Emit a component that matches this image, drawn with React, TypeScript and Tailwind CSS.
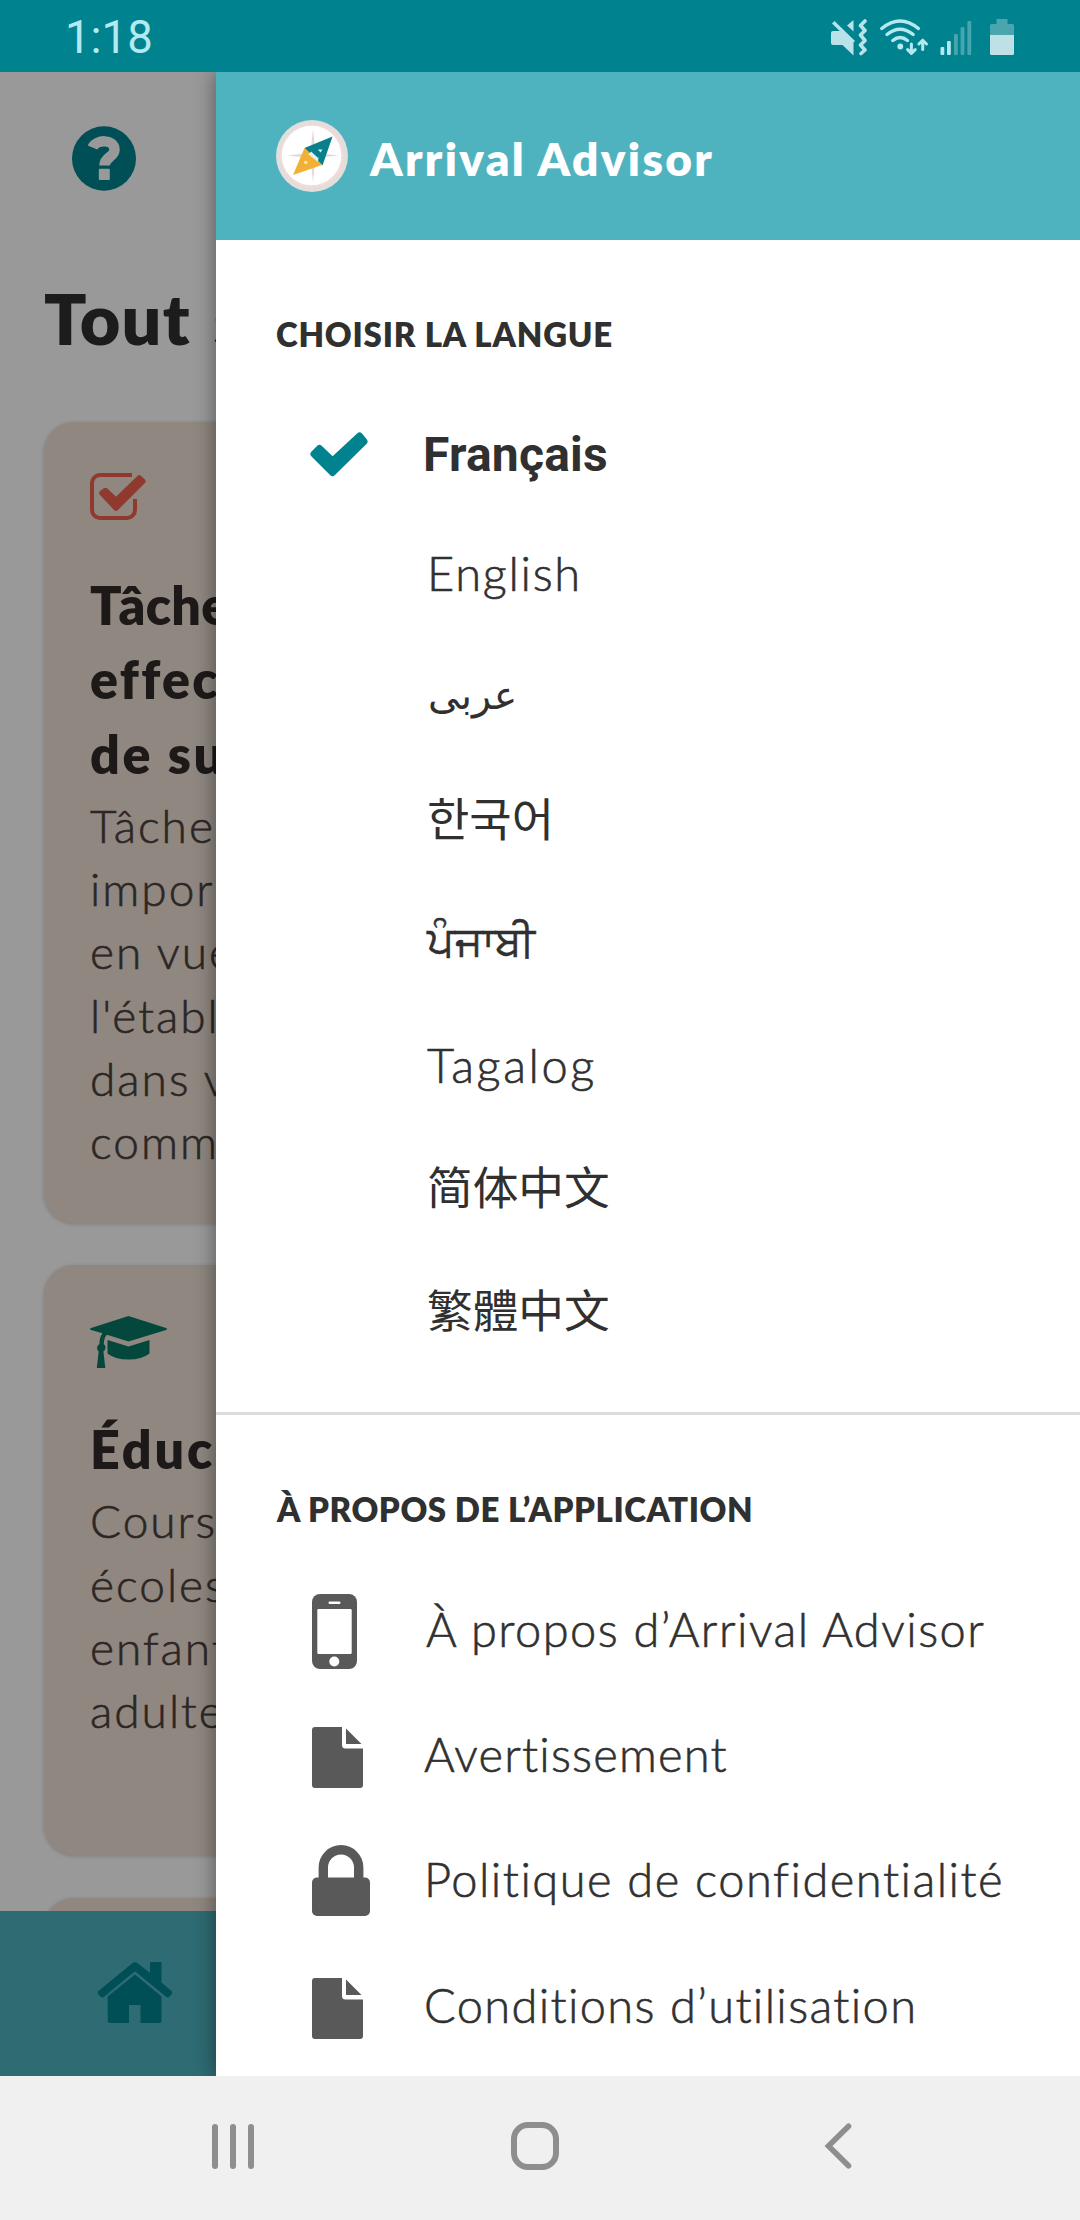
import type { ReactNode } from 'react';

function MuteVibrateIcon() {
  return (
    <svg width="37" height="38" viewBox="0 0 37 38" className="block">
      <g fill="#b9e3e8">
        <path d="M0 14 a2 2 0 0 1 2-2 h8.5 L22.5 24 V36.5 L11.5 26 H2 a2 2 0 0 1-2-2 Z" />
        <path d="M22.5 1 V12.5 L16 6.5 Z" />
        <path d="M1 4.5 L3.5 2 L24 22 L21.5 24.5 Z" />
      </g>
      <path
        d="M34 2 L29.5 6.5 L34 11.5 L29.5 16 L34 21.5 L29.5 26 L34 31 L30 34.5"
        fill="none"
        stroke="#b9e3e8"
        strokeWidth="3.6"
        strokeLinecap="round"
        strokeLinejoin="round"
      />
    </svg>
  );
}

function WifiIcon() {
  return (
    <svg width="49" height="38" viewBox="0 0 49 38" className="block">
      <g fill="none" stroke="#b2eaf0" strokeWidth="3.4" strokeLinecap="round">
        <path d="M1.8 9.5 Q20 -5.5 38.4 9.5" />
        <path d="M7 15.5 Q20 5 33.2 15.5" />
        <path d="M12.8 21.5 Q20 15.5 27.5 21.5" />
      </g>
      <circle cx="20.3" cy="27.5" r="2.9" fill="#b2eaf0" />
      <g fill="none" stroke="#b2eaf0" strokeWidth="3" strokeLinecap="round" strokeLinejoin="round">
        <path d="M31.4 25 V34 M27.6 30.6 L31.4 34.4 L35.2 30.6" />
        <path d="M42.7 30.5 V21.5 M38.9 25 L42.7 21.2 L46.5 25" />
      </g>
    </svg>
  );
}

function SignalIcon() {
  return (
    <svg width="32" height="36" viewBox="0 0 32 36" className="block">
      <rect x="0.5" y="28" width="3.8" height="8" rx="1" fill="#b2eaf0" />
      <rect x="7" y="22" width="3.8" height="14" rx="1" fill="#b2eaf0" />
      <rect x="14" y="15" width="3.8" height="21" rx="1" fill="#48a5ae" />
      <rect x="20.6" y="8" width="3.8" height="28" rx="1" fill="#48a5ae" />
      <rect x="27.4" y="2" width="3.8" height="34" rx="1" fill="#48a5ae" />
    </svg>
  );
}

function BatteryIcon() {
  return (
    <svg width="24" height="36" viewBox="0 0 24 36" className="block">
      <path d="M6.5 0 H17.5 V5 H22.5 a1.5 1.5 0 0 1 1.5 1.5 V16 H0 V6.5 A1.5 1.5 0 0 1 1.5 5 H6.5 Z" fill="#4ba5ae" />
      <path d="M0 16 H24 V34.5 a1.5 1.5 0 0 1 -1.5 1.5 H1.5 A1.5 1.5 0 0 1 0 34.5 Z" fill="#bfe0e4" />
    </svg>
  );
}

function HelpIcon() {
  return (
    <svg width="64" height="65" viewBox="0 0 64 65" className="block">
      <ellipse cx="32" cy="32.5" rx="32" ry="32.3" fill="#00838f" />
      <path
        d="M20.5 21.5 C24 13.5 42 12.5 42.5 23.5 C43 31 32.5 30.5 32.5 39.5"
        fill="none"
        stroke="#fff"
        strokeWidth="10.5"
      />
      <rect x="26.8" y="42.8" width="11" height="11.2" rx="1" fill="#fff" />
    </svg>
  );
}

function CompassLogo() {
  return (
    <svg width="72" height="72" viewBox="0 0 72 72" className="block">
      <circle cx="36" cy="36" r="36" fill="#e3dedb" />
      <circle cx="36" cy="36" r="31.5" fill="#f0dcd9" />
      <circle cx="35.5" cy="35.5" r="29.8" fill="#fff" />
      <path d="M37 9 L39.6 33 L63 35.5 L39.6 38 L37 62 L34.4 38 L11 35.5 L34.4 33 Z" fill="#e0dbd7" />
      <path d="M56.5 16.5 L28.5 28 L46.5 45.5 Z" fill="#0a7f8c" />
      <path d="M28.5 28 L17 55 L46 45 Z" fill="#f2b035" />
      <path d="M32 34 L36.5 31 L42.5 36.5 L42 42 Z" fill="#e9efe6" />
      <path d="M36 31 L42.5 37" stroke="#0a7f8c" strokeWidth="2" />
      <path d="M42 29.5 h4.5 l-2 3 z" fill="#d9f0f0" />
      <circle cx="29.8" cy="42.5" r="1.8" fill="#fbe3b0" />
    </svg>
  );
}

function TealCheck() {
  return (
    <svg width="58" height="45" viewBox="0 0 58 45" className="block">
      <path
        d="M4 22 L9.5 16.5 L22.5 29 L49.5 4 L54 9.5 L22.5 40.5 Z"
        fill="#00838f"
        stroke="#00838f"
        strokeWidth="7"
        strokeLinejoin="round"
      />
    </svg>
  );
}

function TaskIcon() {
  return (
    <svg width="57" height="48" viewBox="0 0 57 48" className="block">
      <path
        d="M42 2 H10 A8 8 0 0 0 2 10 V37 A8 8 0 0 0 10 45 H37 A8 8 0 0 0 45 37 V26"
        fill="none"
        stroke="#f0604e"
        strokeWidth="4"
      />
      <path
        d="M12 20 L15.5 17.5 L26 27.5 L49.3 5 L52.8 8.2 L26 35 Z"
        fill="#f0604e"
        stroke="#f0604e"
        strokeWidth="5.5"
        strokeLinejoin="round"
      />
    </svg>
  );
}

function GraduationIcon() {
  return (
    <svg width="78" height="52" viewBox="0 0 78 52" className="block">
      <g fill="#087767">
        <path d="M38.5 0 L76 12 Q78 13 76 14 L38.5 25.5 L17 18.7 Q14 21 13.8 28 A4.6 4.6 0 0 1 13.4 35.5 L15.3 52 H6.8 L8.7 35.5 A4.6 4.6 0 0 1 9.4 28 Q9.5 21 12.5 17.3 L1 14 Q-1 13 1 12 Z" />
        <path d="M17.5 24 L38.5 30.5 L59.5 24 V37.5 Q52 43.5 38.5 43.5 T17.5 37.5 Z" />
      </g>
    </svg>
  );
}

function HomeIcon() {
  return (
    <svg width="76" height="61" viewBox="0 0 76 61" className="block">
      <g fill="#00838f">
        <path d="M35 1.6 Q38 -1 41 1.6 L53 11 V0 H64.5 V20.5 L74.5 29 Q76 30.5 74.7 32 L72.5 34.8 Q71 36.3 69.3 35 L38 9.2 L6.7 35 Q5 36.3 3.5 34.8 L1.3 32 Q0 30.5 1.5 29 Z" />
        <path d="M38 12.5 L64.5 34.5 V58.5 Q64.5 61 62 61 H43.5 V43 H32 V61 H13.2 Q10.7 61 10.7 58.5 V34.5 Z" />
      </g>
    </svg>
  );
}

function PhoneIcon() {
  return (
    <svg width="45" height="75" viewBox="0 0 45 75" className="block">
      <rect width="45" height="75" rx="8" fill="#595959" />
      <rect x="16.5" y="7.5" width="12" height="2.4" rx="1.2" fill="#fff" />
      <rect x="5.3" y="15" width="34.4" height="45" rx="1.2" fill="#fff" />
      <circle cx="22.3" cy="67.5" r="5" fill="#fff" />
    </svg>
  );
}

function FileIcon() {
  return (
    <svg width="51" height="61" viewBox="0 0 51 61" className="block">
      <path
        d="M3 0 H30 V18 Q30 21.5 33.5 21.5 H51 V58 a3 3 0 0 1 -3 3 H3 a3 3 0 0 1 -3 -3 V3 a3 3 0 0 1 3 -3 Z"
        fill="#595959"
      />
      <path d="M34 1.5 L49.5 17 H34 Z" fill="#595959" />
    </svg>
  );
}

function LockIcon() {
  return (
    <svg width="58" height="71" viewBox="0 0 58 71" className="block">
      <path d="M11.3 35 V22.5 A17.7 17.7 0 0 1 46.7 22.5 V35" fill="none" stroke="#595959" strokeWidth="9.4" />
      <rect y="32.5" width="58" height="38.5" rx="5" fill="#595959" />
    </svg>
  );
}

type TitleLine = { text: string; style: string };

function Card({ className, icon, title, lines }: { className: string; icon: ReactNode; title: TitleLine[]; lines: string[] }) {
  return (
    <section
      className={`ml-11 w-[992px] rounded-[30px] bg-[#efe1d6] pl-[46px] pt-[51px] shadow-[0_1px_4px_rgba(0,0,0,0.2)] ${className}`}
    >
      {icon}
      <h2 className="text-[52px] font-extrabold leading-[74.3px] text-[#2f2b29]">
        {title.map((t) => (
          <div key={t.text} className={t.style}>
            {t.text}
          </div>
        ))}
      </h2>
      <div className="mt-[3px] text-[46px] font-light leading-[63.2px] tracking-[2px] text-[#4a403c] [-webkit-text-stroke:0.6px_#4a403c]">
        {lines.map((t) => (
          <div key={t}>{t}</div>
        ))}
      </div>
    </section>
  );
}

const languages = [
  { label: 'English', style: 'text-[47px] font-light tracking-[1.7px] pl-[3px] pb-[3px] [-webkit-text-stroke:0.6px_#303030]' },
  { label: 'عربى', style: "font-['DejaVu_Sans',sans-serif] text-[39.5px] pl-1 pb-[5px]" },
  { label: '한국어', style: "font-['Noto_Sans_CJK_KR',sans-serif] text-[46px] pl-[3px] pb-[9px]" },
  { label: 'ਪੰਜਾਬੀ', style: 'font-[sans-serif] text-[42.6px] pl-[3px] pb-[4px] [-webkit-text-stroke:0.6px_#303030]' },
  { label: 'Tagalog', style: 'text-[47px] font-light tracking-[2.6px] pl-[3px] pb-[2px] [-webkit-text-stroke:0.6px_#303030]' },
  { label: '简体中文', style: "font-['Noto_Sans_CJK_SC',sans-serif] text-[45.7px] pl-[3px] pb-[8px]" },
  { label: '繁體中文', style: "font-['Noto_Sans_CJK_TC',sans-serif] text-[45.7px] pl-[3px] pb-[8px]" },
];

const links = [
  { icon: <PhoneIcon />, offset: 'mt-[7px]', label: 'À propos d’Arrival Advisor', style: 'tracking-[1.45px] pl-[2px]' },
  { icon: <FileIcon />, offset: 'mt-[10px]', label: 'Avertissement', style: 'tracking-[1.2px]' },
  { icon: <LockIcon />, offset: 'mt-[5px]', label: 'Politique de confidentialité', style: 'tracking-[1.5px]' },
  { icon: <FileIcon />, offset: 'mt-[9px]', label: 'Conditions d’utilisation', style: 'tracking-[1.35px]' },
];

export default function App() {
  return (
    <div className="flex h-[2220px] w-[1080px] flex-col overflow-hidden bg-white font-['Lato',sans-serif]">
      <header className="flex h-[72px] shrink-0 items-start bg-[#00838f] pl-[65px] pr-[66px] pt-[19px]">
        <span className="mt-px font-['Roboto',sans-serif] text-[45.5px] leading-[36px] text-[#b2eaf0]">1:18</span>
        <div className="ml-auto flex items-start">
          <MuteVibrateIcon />
          <div className="ml-3">
            <WifiIcon />
          </div>
          <div className="ml-[11px]">
            <SignalIcon />
          </div>
          <div className="ml-[18px]">
            <BatteryIcon />
          </div>
        </div>
      </header>

      <div className="relative h-[2004px] shrink-0 overflow-hidden">
        <div className="flex h-full flex-col whitespace-nowrap">
          <main className="h-[1839px] shrink-0 overflow-hidden bg-white">
            <div className="pl-[72px] pt-[54px]">
              <HelpIcon />
            </div>
            <h1 className="mt-[85px] pl-11 text-[70px] font-extrabold leading-[85px] tracking-[1.3px] text-[#2f2f2f] [word-spacing:5px]">
              Tout s
            </h1>
            <Card
              className="mt-[61px] h-[801px]"
              icon={
                <div className="mb-[47px]">
                  <TaskIcon />
                </div>
              }
              title={[
                { text: 'Tâche', style: 'tracking-[0.3px]' },
                { text: 'effec', style: 'tracking-[2.3px]' },
                { text: 'de su', style: 'tracking-[2.6px]' },
              ]}
              lines={['Tâches', 'impor', 'en vue', "l'établ", 'dans v', 'comm']}
            />
            <Card
              className="mt-[42px] h-[590px]"
              icon={
                <div className="mb-[44px]">
                  <GraduationIcon />
                </div>
              }
              title={[{ text: 'Éduc', style: 'tracking-[2.8px]' }]}
              lines={['Cours', 'écoles', 'enfant', 'adulte']}
            />
            <Card className="mt-[43px] h-[590px]" icon={null} title={[]} lines={[]} />
          </main>
          <nav className="h-[165px] shrink-0 bg-[#4db2bf] pl-[97px] pt-[51px]">
            <HomeIcon />
          </nav>
        </div>

        <div className="absolute inset-0 bg-black/40" />

        <aside className="absolute inset-y-0 right-0 w-[864px] bg-white text-[#303030] shadow-[0_0_20px_rgba(0,0,0,0.45)]">
          <div className="flex h-[168px] items-center bg-[#4fb3bf] pl-[60px]">
            <CompassLogo />
            <h2 className="ml-[22px] mt-1 text-[46px] font-extrabold tracking-[2.3px] text-white">Arrival Advisor</h2>
          </div>

          <h3 className="mt-[74px] pl-[60px] text-[33px] font-extrabold leading-[40px] tracking-[0.8px]">CHOISIR LA LANGUE</h3>
          <ul className="mt-[41px]">
            <li className="flex h-[118px] items-center">
              <div className="w-[207px] pl-[94px]">
                <TealCheck />
              </div>
              <span className="pt-px font-['Roboto',sans-serif] text-[48px] font-bold leading-[118px] tracking-[0.2px]">Français</span>
            </li>
            {languages.map((l) => (
              <li key={l.label} className="flex h-[123px] items-center pl-[208px]">
                <span className={`leading-[123px] ${l.style}`}>{l.label}</span>
              </li>
            ))}
          </ul>

          <hr className="mt-[38px] h-[3px] border-0 bg-[#dcdcdc]" />

          <h3 className="mt-[74px] pl-[61px] text-[33px] font-extrabold leading-[40px] tracking-[0.55px]">À PROPOS DE L’APPLICATION</h3>
          <ul className="mt-[36px]">
            {links.map((l) => (
              <li key={l.label} className="flex h-[125.3px] items-center">
                <div className={`w-[208px] pl-24 ${l.offset}`}>{l.icon}</div>
                <span
                  className={`whitespace-nowrap pt-[3px] text-[47px] font-light leading-[125px] [-webkit-text-stroke:0.6px_#303030] ${l.style}`}
                >
                  {l.label}
                </span>
              </li>
            ))}
          </ul>
        </aside>
      </div>

      <footer className="flex h-[144px] shrink-0 items-center bg-[#f0f0f0] pb-[4px] pl-[212px]">
        <div className="flex gap-3">
          <div className="h-[45px] w-1.5 rounded-full bg-[#8e8e8e]" />
          <div className="h-[45px] w-1.5 rounded-full bg-[#8e8e8e]" />
          <div className="h-[45px] w-1.5 rounded-full bg-[#8e8e8e]" />
        </div>
        <div className="ml-[257px] h-12 w-12 rounded-[17px] border-[6px] border-[#8e8e8e]" />
        <svg width="28" height="46" viewBox="0 0 28 46" className="ml-[265px]">
          <path d="M24.5 3.2 L4.5 23 L24.5 42.8" fill="none" stroke="#8e8e8e" strokeWidth="5.6" strokeLinecap="round" />
        </svg>
      </footer>
    </div>
  );
}
